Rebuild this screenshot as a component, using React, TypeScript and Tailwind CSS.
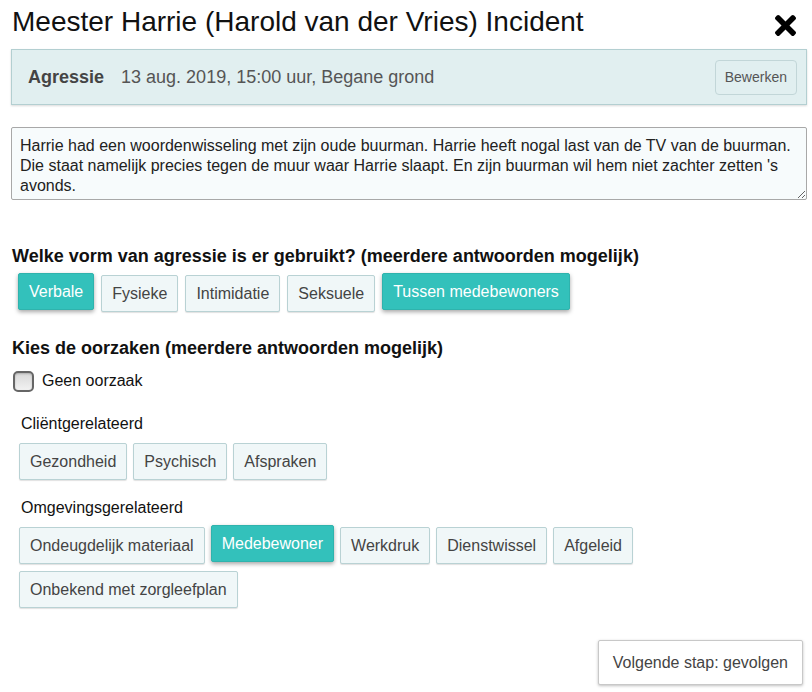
import React from "react";

const font = { fontFamily: '"Liberation Sans", Arial, sans-serif' };

function Chip({ label, selected }: { label: string; selected?: boolean }) {
  if (selected) {
    return (
      <button className="-translate-y-[2px] h-[37px] px-[10px] text-[16px] leading-[19px] rounded-[2px] border border-[#2fb3ad] bg-[#33c1bb] text-white shadow-[0_2px_4px_rgba(0,0,0,0.35)]">
        {label}
      </button>
    );
  }
  return (
    <button className="h-[37px] px-[10px] text-[16px] leading-[19px] rounded-[2px] border border-[#b9d2d4] bg-[#f0f7f8] text-[#444] shadow-[0_1px_1px_rgba(0,0,0,0.12)]">
      {label}
    </button>
  );
}

function ChipRow({ children, className = "" }: { children: React.ReactNode; className?: string }) {
  return <div className={"flex flex-wrap gap-x-[6px] gap-y-[7px] " + className}>{children}</div>;
}

export default function App() {
  return (
    <div className="w-[812px] h-[692px] flex flex-col bg-white text-[#111] overflow-hidden" style={font}>
      <header className="flex items-start justify-between pl-[12px] pr-[16px] pt-[4px] h-[49px]">
        <h1 className="text-[28px] leading-[36px] text-[#111]">
          Meester Harrie (Harold van der Vries) Incident
        </h1>
        <svg width="21" height="21" viewBox="0 80 352 352" className="mt-[11px]">
          <path
            fill="#000"
            d="M242.72 256l100.07-100.07c12.28-12.28 12.28-32.19 0-44.48l-22.24-22.24c-12.28-12.28-32.19-12.28-44.48 0L176 189.28 75.930 89.21c-12.28-12.28-32.19-12.28-44.48 0L9.21 111.45c-12.28 12.28-12.28 32.19 0 44.48L109.28 256 9.21 356.07c-12.28 12.28-12.28 32.19 0 44.48l22.24 22.24c12.28 12.28 32.2 12.28 44.48 0L176 322.72l100.07 100.07c12.28 12.28 32.2 12.28 44.48 0l22.24-22.24c12.28-12.28 12.28-32.19 0-44.48L242.72 256z"
          />
        </svg>
      </header>

      <section className="flex flex-col gap-[22px] px-[11px] pr-[5px]">
        <div className="h-[56px] flex items-center justify-between border border-[#b3cfd1] bg-[#e1eff0] pl-[16px] pr-[9px] shadow-[0_1px_2px_rgba(0,0,0,0.15)]">
          <div className="flex items-center gap-[17px] text-[18px]">
            <span className="font-bold text-[#444]">Agressie</span>
            <span className="text-[#555]">13 aug. 2019, 15:00 uur, Begane grond</span>
          </div>
          <button className="h-[35px] px-[9px] text-[14px] text-[#555] rounded-[4px] border border-[#c2d6d8] bg-[#e1eff0]">
            Bewerken
          </button>
        </div>

        <div className="h-[73px] border border-[#a8a8a8] rounded-[2px] bg-[#f7fbfc]">
          <textarea
            className="w-full h-full resize bg-transparent outline-none px-[8px] pt-[8px] text-[16px] leading-[20px] text-[#222] overflow-hidden"
            style={font}
            defaultValue={
              "Harrie had een woordenwisseling met zijn oude buurman. Harrie heeft nogal last van de TV van de buurman. Die staat namelijk precies tegen de muur waar Harrie slaapt. En zijn buurman wil hem niet zachter zetten 's avonds."
            }
          />
        </div>
      </section>

      <section className="flex flex-col gap-[9px] pt-[46px] pl-[12px]">
        <h2 className="text-[18px] leading-[20px] font-bold text-[#111]">
          Welke vorm van agressie is er gebruikt? (meerdere antwoorden mogelijk)
        </h2>
        <div className="flex gap-[7px] pl-[6px]">
          <Chip label="Verbale" selected />
          <Chip label="Fysieke" />
          <Chip label="Intimidatie" />
          <Chip label="Seksuele" />
          <Chip label="Tussen medebewoners" selected />
        </div>
      </section>

      <section className="flex flex-col pt-[26px] pl-[12px]">
        <h2 className="text-[18px] leading-[20px] font-bold text-[#111]">
          Kies de oorzaken (meerdere antwoorden mogelijk)
        </h2>
        <label className="flex items-center gap-[8px] pl-[1px] pt-[11px]">
          <span className="w-[21px] h-[21px] rounded-[5px] border-2 border-[#666] bg-gradient-to-b from-[#d8d8d8] to-[#f2f2f2] shadow-[inset_0_1px_2px_rgba(0,0,0,0.2)]" />
          <span className="text-[16px] text-[#111]">Geen oorzaak</span>
        </label>

        <div className="flex flex-col gap-[9px] pt-[21px] pl-[7px]">
          <div className="pl-[2px] text-[16px] leading-[20px] text-[#111]">Cliëntgerelateerd</div>
          <ChipRow>
            <Chip label="Gezondheid" />
            <Chip label="Psychisch" />
            <Chip label="Afspraken" />
          </ChipRow>
        </div>

        <div className="flex flex-col gap-[9px] pt-[18px] pl-[7px]">
          <div className="pl-[2px] text-[16px] leading-[20px] text-[#111]">Omgevingsgerelateerd</div>
          <ChipRow className="w-[640px]">
            <Chip label="Ondeugdelijk materiaal" />
            <Chip label="Medebewoner" selected />
            <Chip label="Werkdruk" />
            <Chip label="Dienstwissel" />
            <Chip label="Afgeleid" />
            <Chip label="Onbekend met zorgleefplan" />
          </ChipRow>
        </div>
      </section>

      <footer className="flex justify-end pr-[9px] pt-[32px]">
        <button className="h-[45px] px-[14px] text-[16px] text-[#444] bg-white border border-[#c8c8c8] rounded-[2px] shadow-[0_1px_3px_rgba(0,0,0,0.25)]">
          Volgende stap: gevolgen
        </button>
      </footer>
    </div>
  );
}
